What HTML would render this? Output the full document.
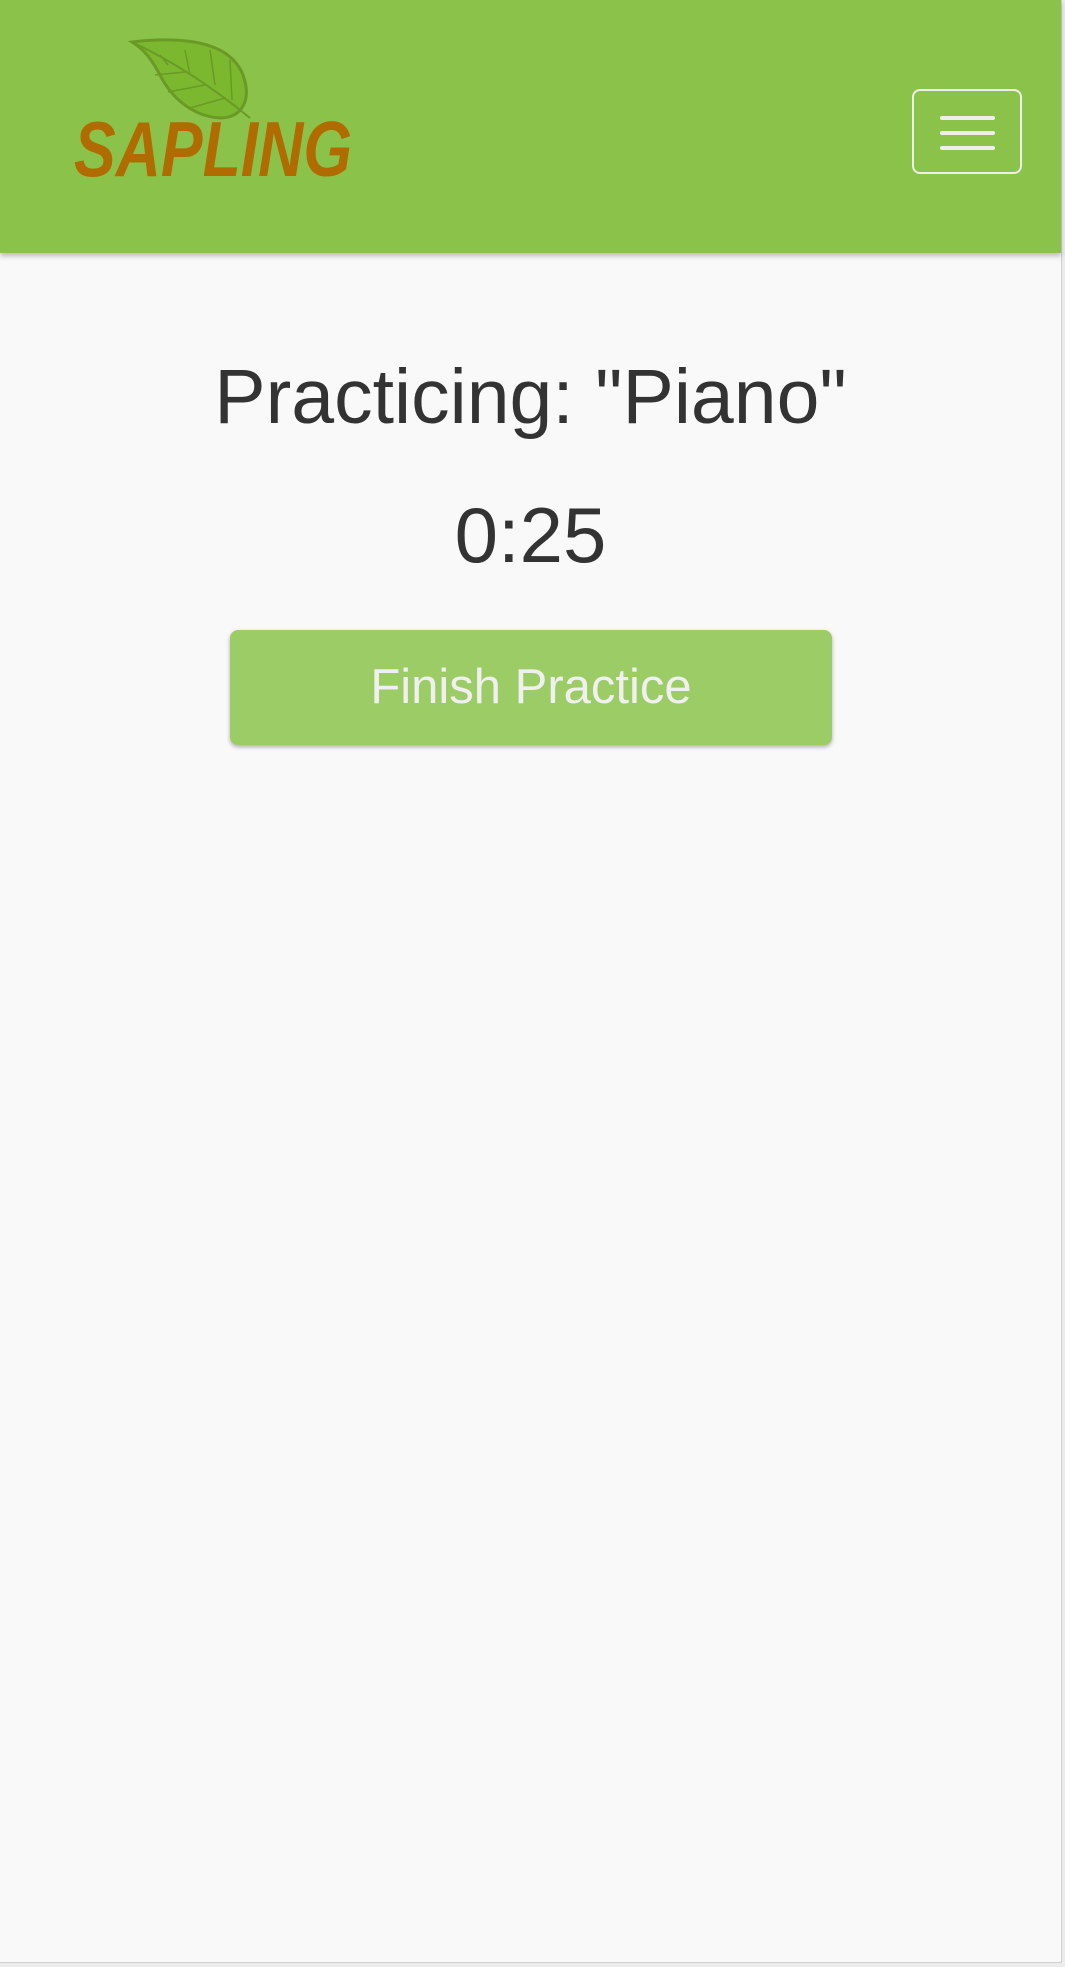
<!DOCTYPE html>
<html><head><meta charset="utf-8"><style>
html,body{margin:0;padding:0;}
body{width:1065px;height:1967px;background:#ececec;position:relative;overflow:hidden;font-family:"Liberation Sans",sans-serif;}
#page{position:absolute;left:0;top:0;width:1061px;height:1962px;background:#f9f9f9;border-right:1px solid #d0d0d0;border-bottom:1px solid #d0d0d0;}
#hdr{position:absolute;left:0;top:0;width:1061px;height:253px;background:#8bc34a;box-shadow:0 3px 5px rgba(0,0,0,0.25);}
#burger{position:absolute;left:912px;top:89px;width:106px;height:81px;border:2px solid #eee;border-radius:8px;box-sizing:content-box;}
#burger i{position:absolute;left:26px;width:55px;height:4px;background:#eee;border-radius:2px;}
h1{position:absolute;left:0;width:1061px;top:352px;margin:0;text-align:center;font-weight:normal;font-size:77px;line-height:90px;color:#333;letter-spacing:0px;}
#timer{position:absolute;left:0;width:1061px;top:490px;text-align:center;font-size:78px;line-height:90px;color:#333;}
#btn{position:absolute;left:230px;top:630px;width:602px;height:115px;background:#9ccc65;border-radius:8px;box-shadow:0 2px 4px rgba(0,0,0,0.3);color:#f0f0f0;font-size:49px;line-height:115px;text-align:center;}
</style></head><body>
<div id="page">
<div id="hdr">
<svg width="320" height="200" style="position:absolute;left:60px;top:30px" viewBox="0 0 320 200">
<path d="M72 12 C125 6 170 12 183 45 C192 70 182 88 160 88 C130 86 110 65 100 45 C92 30 85 20 72 12 Z" fill="#7cb82f" stroke="#689a25" stroke-width="3"/>
<path d="M72 12 C110 30 150 55 190 88" stroke="#689a25" stroke-width="2" fill="none"/>
<path d="M100 25 L108 35 M125 20 L130 45 M150 20 L155 55 M170 30 L172 70 M95 45 L125 42 M108 62 L145 55 M130 78 L165 68" stroke="#689a25" stroke-width="1.5" fill="none"/>
<text x="14" y="146" font-family="Liberation Sans, sans-serif" font-style="italic" font-weight="bold" font-size="78" fill="#b06c00" textLength="278" lengthAdjust="spacingAndGlyphs">SAPLING</text>
</svg>
<div id="burger"><i style="top:25px"></i><i style="top:40px"></i><i style="top:55px"></i></div>
</div>
<h1>Practicing: "Piano"</h1>
<div id="timer">0:25</div>
<div id="btn">Finish Practice</div>
</div>
</body></html>
